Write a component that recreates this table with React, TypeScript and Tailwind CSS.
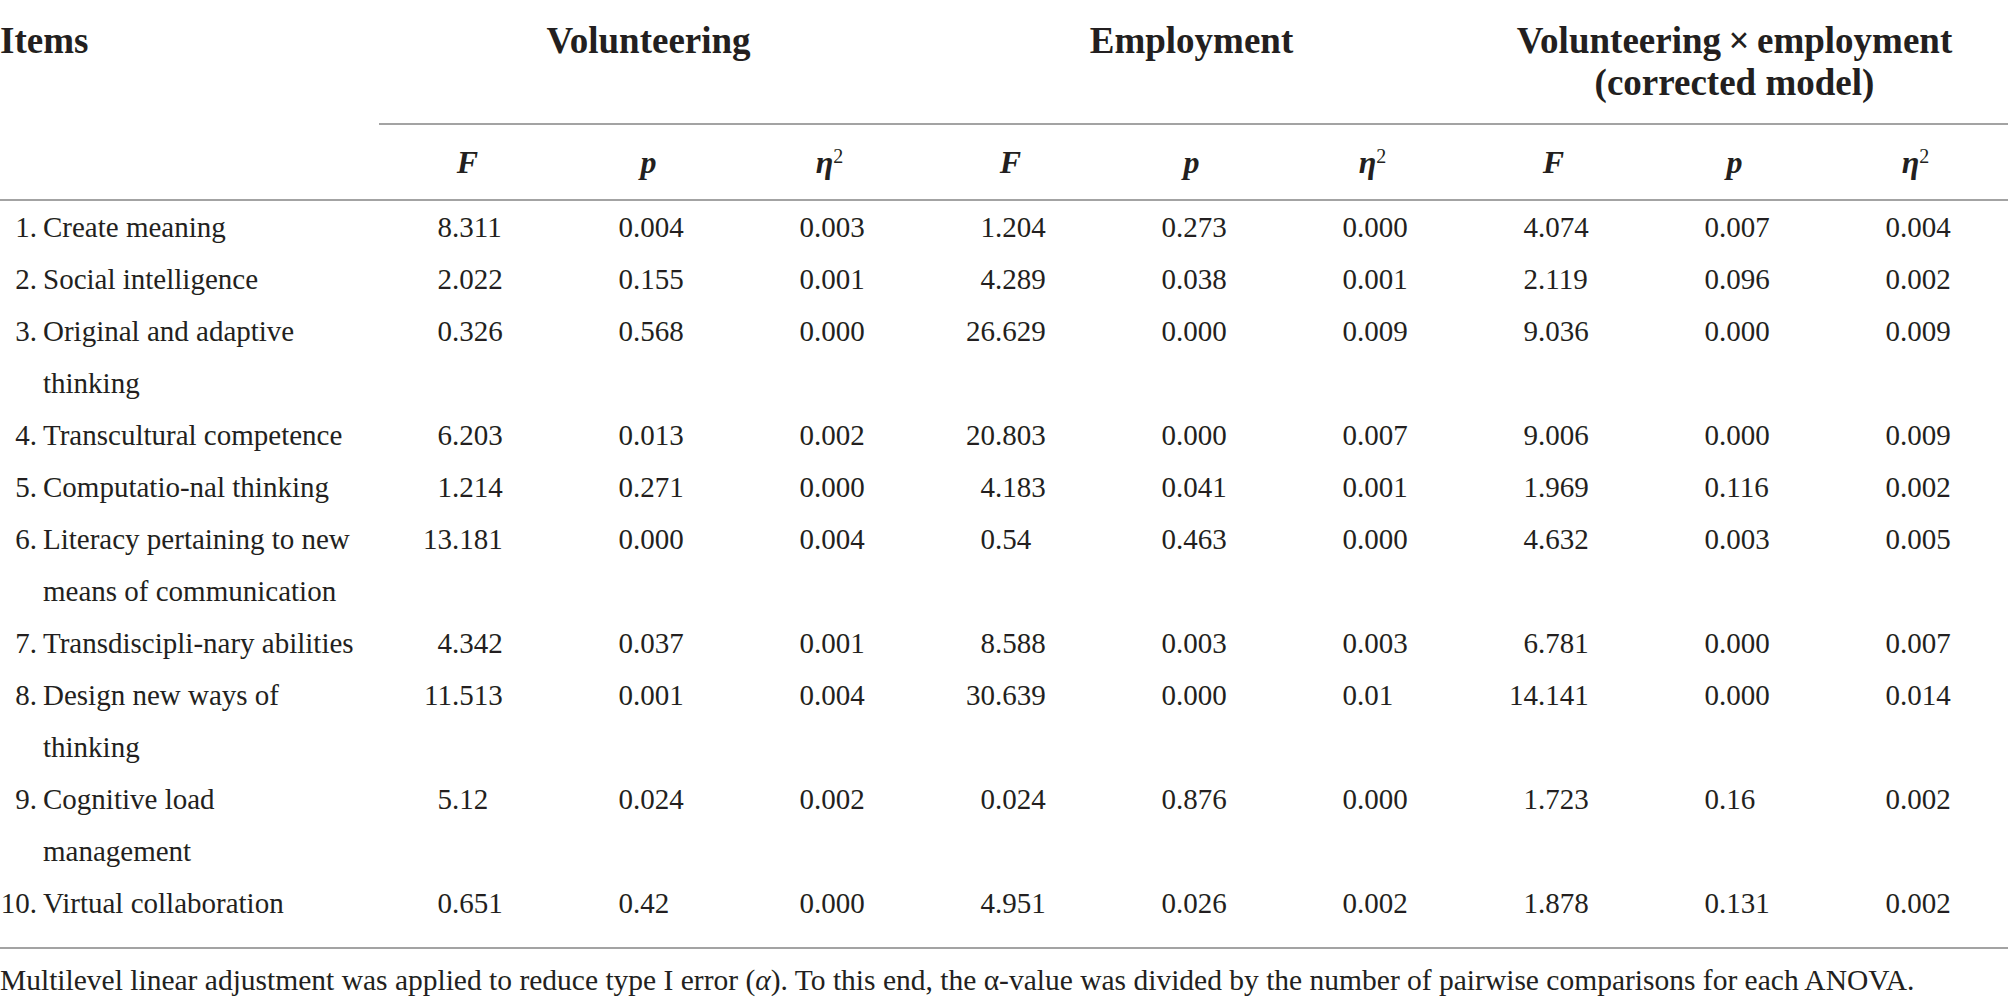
import React from 'react';

type Row = { lines: string[]; num: string; vals: string[] };

const rows: Row[] = [
    { num: '1.', lines: ['Create meaning'], vals: ['8.311', '0.004', '0.003', '1.204', '0.273', '0.000', '4.074', '0.007', '0.004'] },
    { num: '2.', lines: ['Social intelligence'], vals: ['2.022', '0.155', '0.001', '4.289', '0.038', '0.001', '2.119', '0.096', '0.002'] },
    { num: '3.', lines: ['Original and adaptive', 'thinking'], vals: ['0.326', '0.568', '0.000', '26.629', '0.000', '0.009', '9.036', '0.000', '0.009'] },
    { num: '4.', lines: ['Transcultural competence'], vals: ['6.203', '0.013', '0.002', '20.803', '0.000', '0.007', '9.006', '0.000', '0.009'] },
    { num: '5.', lines: ['Computatio-nal thinking'], vals: ['1.214', '0.271', '0.000', '4.183', '0.041', '0.001', '1.969', '0.116', '0.002'] },
    { num: '6.', lines: ['Literacy pertaining to new', 'means of communication'], vals: ['13.181', '0.000', '0.004', '0.54', '0.463', '0.000', '4.632', '0.003', '0.005'] },
    { num: '7.', lines: ['Transdiscipli-nary abilities'], vals: ['4.342', '0.037', '0.001', '8.588', '0.003', '0.003', '6.781', '0.000', '0.007'] },
    { num: '8.', lines: ['Design new ways of', 'thinking'], vals: ['11.513', '0.001', '0.004', '30.639', '0.000', '0.01', '14.141', '0.000', '0.014'] },
    { num: '9.', lines: ['Cognitive load', 'management'], vals: ['5.12', '0.024', '0.002', '0.024', '0.876', '0.000', '1.723', '0.16', '0.002'] },
    { num: '10.', lines: ['Virtual collaboration'], vals: ['0.651', '0.42', '0.000', '4.951', '0.026', '0.002', '1.878', '0.131', '0.002'] },
];

const groups = ['Volunteering', 'Employment'];

function Num({ v }: { v: string }) {
    const [int, frac] = v.split('.');
    return (
        <div className="w-[181px] whitespace-nowrap">
            <span className="inline-block w-[75px] text-right">{int}</span>
            <span>.{frac}</span>
        </div>
    );
}

function SubHead({ k }: { k: number }) {
    const label = k % 3;
    return (
        <div className="w-[181px] text-center font-bold italic">
            {label === 0 && 'F'}
            {label === 1 && 'p'}
            {label === 2 && (
                <span>
                    η<sup className="not-italic font-normal text-[20px]">2</sup>
                </span>
            )}
        </div>
    );
}

export default function App() {
    return (
        <div className="w-[2008px] h-[1004px] bg-white text-[#231f20] font-['Liberation_Serif',serif] overflow-hidden">
            {/* group headers */}
            <div className="flex h-[123px] pt-[20px] text-[37px] font-bold leading-[42px]">
                <div className="w-[377px]">Items</div>
                {groups.map((g) => (
                    <div key={g} className="w-[543px] text-center">{g}</div>
                ))}
                <div className="w-[543px] text-center">
                    Volunteering{'\u2009'}×{'\u2009'}employment
                    <br />
                    (corrected model)
                </div>
            </div>
            <div className="ml-[379px] h-[2px] bg-[#a3a3a3]"></div>

            {/* F / p / eta row */}
            <div className="flex h-[74px] items-center text-[32px]">
                <div className="w-[377px]"></div>
                {Array.from({ length: 9 }).map((_, i) => (
                    <SubHead key={i} k={i} />
                ))}
            </div>
            <div className="h-[2px] bg-[#a3a3a3]"></div>

            {/* body */}
            <div className="pb-[18px] text-[29px] leading-[52px]">
                {rows.map((r) => (
                    <div key={r.num} className="flex">
                        <div className="w-[377px] flex whitespace-nowrap">
                            <span className="w-[37px] text-right shrink-0">{r.num}</span>
                            <div className="pl-[6px]">
                                {r.lines.map((l) => (
                                    <div key={l}>{l}</div>
                                ))}
                            </div>
                        </div>
                        {r.vals.map((v, i) => (
                            <Num key={i} v={v} />
                        ))}
                    </div>
                ))}
            </div>
            <div className="h-[2px] bg-[#a3a3a3]"></div>

            <p className="pt-[13px] text-[29.5px] leading-[36px] whitespace-nowrap">
                Multilevel linear adjustment was applied to reduce type I error (<span className="italic">α</span>). To this end, the α-value was divided by the number of pairwise comparisons for each ANOVA.
            </p>
        </div>
    );
}
